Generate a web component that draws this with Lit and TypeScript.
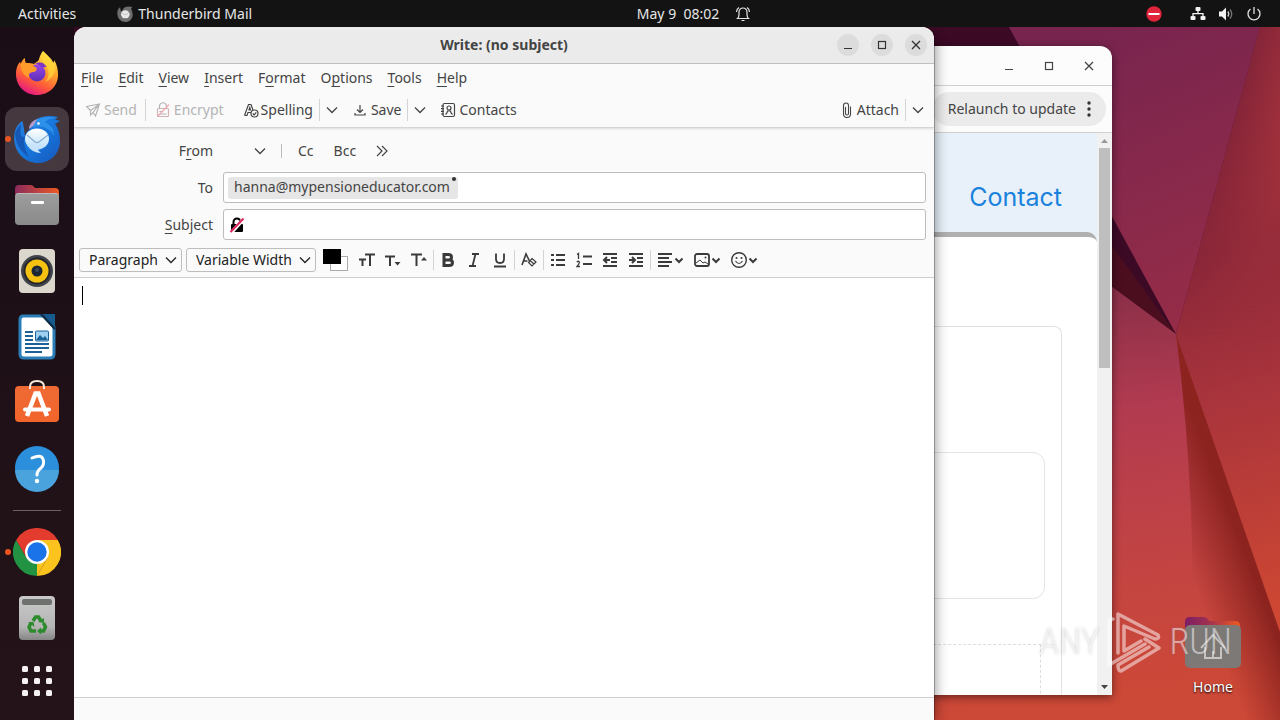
import { LitElement, html, css, svg } from "lit";
import { customElement } from "lit/decorators.js";

const chevron = html`<svg class="chev" width="12" height="12" viewBox="0 0 12 12"><path d="M1 3.500 6 8.500 11 3.500" fill="none" stroke="currentColor" stroke-width="1.300"/></svg>`;
const boldChevron = html`<svg width="10" height="16" viewBox="0 0 10 16"><path d="M1.500 6.500 5 10 8.500 6.500" fill="none" stroke="currentColor" stroke-width="2"/></svg>`;

const icons = {
  firefox: html`<svg width="48" height="48" viewBox="0 0 48 48">
    <defs><linearGradient id="ff1" x1="0.800" y1="0" x2="0.300" y2="1"><stop offset="0" stop-color="#fff44f"/><stop offset="0.400" stop-color="#ffa02a"/><stop offset="0.700" stop-color="#ff5a3a"/><stop offset="1" stop-color="#e31587"/></linearGradient>
    <linearGradient id="ff2" x1="0" y1="0" x2="0" y2="1"><stop offset="0" stop-color="#9a45e8"/><stop offset="1" stop-color="#5b2fb5"/></linearGradient></defs>
    <path d="M30 2c4 4 8 7 10 12 1-1 1-2 1-3 3 4 4 10 4 15 0 11-9 20-21 20S3 37 3 25c0-6 2-10 4-12l1 2c0-2 2-5 4-6 0 2 0 4 1 5 3 0 6 0 8 1 2-2 5-3 5-5 1-3 2-6 4-8z" fill="url(#ff1)"/>
    <circle cx="24" cy="24" r="8.500" fill="url(#ff2)"/>
    <path d="M8 14c5-1 11 0 14 4 3 1 2 4-1 5-4 0-6 2-5 6-5-2-9-8-8-15z" fill="#ff9b2b"/>
    <path d="M22 15c5-3 10-1 12 3-2 0-4 0-5 1-1-2-4-4-7-4z" fill="#7b36c9"/>
    <path d="M30 2c-3 5-1 11 3 15 4 5 3 12-1 16 10-4 12-14 8-20C38 8 33 6 30 2z" fill="#ffd93a" opacity="0.700"/></svg>`,
  thunderbird: html`<svg width="48" height="48" viewBox="0 0 48 48">
    <defs><linearGradient id="tb1" x1="0" y1="0" x2="1" y2="1"><stop offset="0" stop-color="#2a80e4"/><stop offset="0.500" stop-color="#1777dc"/><stop offset="1" stop-color="#1757bd"/></linearGradient>
    <linearGradient id="tb2" x2="0" y2="1"><stop stop-color="#ffffff"/><stop offset="1" stop-color="#b9defa"/></linearGradient></defs>
    <path d="M9.500 6C3 10 0 18 1.500 27 3 39 13 48 25 48c13 0 22-10 22-22 0-7-2-13-5-17l5-3c-2-1-3-1-5-1l3-3C33-1 21 2 17.500 11L17 14q-4 3-5 7-1-8-2.500-15z" fill="url(#tb1)"/>
    <path d="M2 18Q3 34 16 42 9 30 12 21 6 26 8 9 4 13 2 18z" fill="#1658b5"/>
    <path d="M20 8C25 2 36 1 44 3q-8 0-12 4 9 4 9 14-6-12-21-9z" fill="#3aa0f2" opacity="0.600"/>
    <path d="M16 14c0-5 4-9 9-10-3 2-3 5-5 7z" fill="#b59bcb"/>
    <circle cx="25.500" cy="8.500" r="1.300" fill="#fff"/>
    <ellipse cx="24" cy="24" rx="12" ry="10.500" fill="url(#tb2)"/>
    <path d="M14 30q5 8 14 8-3-2-3-4l6-3z" fill="#c6e3fa"/>
    <path d="M14 20l8 7q2 1 4 0l9-7" fill="none" stroke="#86aed0" stroke-width="1.300"/></svg>`,
  files: html`<svg width="48" height="48" viewBox="0 0 48 48">
    <defs><linearGradient id="fl1"><stop offset="0" stop-color="#8a2a5d"/><stop offset="1" stop-color="#ee5a24"/></linearGradient><linearGradient id="fl2" x2="0" y2="1"><stop stop-color="#9d9d9d"/><stop offset="1" stop-color="#8a8a8a"/></linearGradient></defs>
    <path d="M2 8q0-4 4-4h12q2 0 4 3h20q4 0 4 4v12H2z" fill="url(#fl1)"/><rect x="2" y="12" width="44" height="32" rx="4" fill="url(#fl2)"/><path d="M3 13.500q1-1 3-1h36q2 0 3 1" stroke="#bbb" fill="none"/><rect x="18" y="20" width="13" height="3" rx="1" fill="#fff"/></svg>`,
  music: html`<svg width="48" height="48" viewBox="0 0 48 48"><rect x="6" y="2" width="36" height="44" rx="4" fill="#dcd7cd"/><circle cx="24" cy="24" r="16" fill="#40434a"/><circle cx="24" cy="24" r="13.500" fill="#25272c"/><circle cx="24" cy="24" r="11.500" fill="#f5c211"/><circle cx="24" cy="24" r="5.500" fill="#1d2733"/><circle cx="24" cy="23" r="2" fill="#3a4a5c"/></svg>`,
  writer: html`<svg width="48" height="48" viewBox="0 0 48 48"><path d="M10 3h21l10 11v27q0 4-4 4H11q-4 0-4-4V7q0-4 3-4z" fill="#fff" stroke="#2a7fb8" stroke-width="3"/><path d="M29 1h13v13z" fill="#175a8e"/><path d="M28 1l14 15" stroke="#0d2b45" stroke-width="2.500"/>
    <g fill="#1b6299"><rect x="12" y="18" width="8" height="2"/><rect x="12" y="22" width="8" height="2"/><rect x="12" y="26" width="8" height="2"/><rect x="12" y="30" width="24" height="2"/><rect x="12" y="34" width="24" height="2"/><rect x="12" y="38" width="17" height="2"/></g><rect x="22.500" y="18" width="13" height="10" rx="1" fill="#9fd0f0" stroke="#1b6299"/><path d="M23 27l4-5 3 3 2-2 3 4z" fill="#1b6299"/></svg>`,
  software: html`<svg width="48" height="48" viewBox="0 0 48 48"><defs><linearGradient id="sw1" x2="0" y2="1"><stop stop-color="#ee6a35"/><stop offset="1" stop-color="#f2652b"/></linearGradient></defs><rect x="2" y="7" width="44" height="36" rx="4" fill="url(#sw1)"/><path d="M17 10V8q0-6 7-6t7 6v2" fill="none" stroke="#f7e9d8" stroke-width="2"/><path d="M14 37 22.500 14.500h3L34 37" fill="none" stroke="#fff" stroke-width="4.500"/><path d="M12 30.500h24" stroke="#fff" stroke-width="4" stroke-linecap="round"/></svg>`,
  help: html`<svg width="48" height="48" viewBox="0 0 48 48"><circle cx="24" cy="23" r="22" fill="#2b8fdc"/><path d="M2 25h44a22 22 0 0 1-44 0z" fill="#4aa3dd"/><path d="M19 13q9-4 11 1t-2 9q-4 3-4 7" fill="none" stroke="#fff" stroke-width="3" stroke-linecap="round"/><circle cx="24" cy="36" r="2.200" fill="#fff"/></svg>`,
  chrome: html`<svg width="48" height="48" viewBox="0 0 48 48"><path d="M3.200 12 13.600 30 24 36 24 48A24 24 0 0 1 3.200 12z" fill="#229342"/><path d="M44.800 12A24 24 0 0 1 24 48L34.400 30 34 18 24 12z" fill="#fcc31e"/><path d="M3.200 12A24 24 0 0 1 44.800 12H24L16 28 13.600 30z" fill="#e33b2e"/><path d="M24 36 34.400 30 24 48z" fill="#fcc31e"/><circle cx="24" cy="24" r="12" fill="#fff"/><circle cx="24" cy="24" r="9.700" fill="#1a73e8"/></svg>`,
  trash: html`<svg width="48" height="48" viewBox="0 0 48 48"><defs><linearGradient id="tr1" x2="0" y2="1"><stop stop-color="#c9c9c9"/><stop offset="0.700" stop-color="#b5b5b5"/><stop offset="1" stop-color="#858585"/></linearGradient></defs><rect x="6" y="2" width="36" height="44" rx="4" fill="url(#tr1)"/><rect x="9" y="5" width="30" height="6" rx="2" fill="#6f716f"/>
    <g fill="none" stroke="#2c8b2c" stroke-width="3.500"><path d="M20 27l2.500-4h3l2.500 4M30.500 29l2 4-2 4H27M23 37h-5l-2-4 2-4"/></g><path d="M25 28l6 1v-5zM28 33.500v7l-4-3.500zM15 28l5.500 0 1 5z" fill="#2c8b2c"/></svg>`,
  grid: html`<svg width="48" height="48" viewBox="0 0 48 48"><g fill="#f6f2f4">${[9, 21, 33].map((y) => [9, 21, 33].map((x) => svg`<rect x=${x} y=${y} width="6" height="6" rx="1.500"/>`))}</g></svg>`,
};

const s16 = (body: unknown) => html`<svg width="16" height="16" viewBox="0 0 16 16" fill="none" stroke="currentColor" stroke-width="1.200">${body}</svg>`;
const f16 = (body: unknown) => html`<svg width="16" height="16" viewBox="0 0 16 16" fill="none" stroke="currentColor" stroke-width="2">${body}</svg>`;

const tool = {
  send: s16(svg`<path d="M1.500 4.500 14.500 2 10.500 14 8 10.500 5.500 13V8.500zM5.500 8.500 14 2.500 8 10.500"/>`),
  encrypt: s16(svg`<rect x="2.500" y="6.500" width="11" height="8" rx="1" stroke="#d3b3b3"/><path d="M4.500 6.500V4.500a3.500 3.500 0 0 1 7-.5v2.500M4.500 9.500h3M4.500 12h7"/><path d="M2.500 14.500 14 2.500" stroke="#efa9b2"/>`),
  spelling: s16(svg`<path d="M1.500 13.500 5.500 2.500H8L10 8M1.500 13.500H4L5 10.500H8M6 8l.8-2.500L7.500 8z"/><circle cx="11.500" cy="11.500" r="3.500"/><path d="M9.800 11.500l1.300 1.300 2.200-2.400"/>`),
  save: s16(svg`<path d="M8 3v7M5 7.500 8 10.500l3-3M3 11v2h10v-2"/>`),
  contacts: s16(svg`<rect x="3" y="1.500" width="11.500" height="13" rx="1.500"/><path d="M1 4h3M1 6.700h3M1 9.300h3M1 12h3"/><circle cx="9" cy="6" r="2"/><path d="M5.500 12.500c1-1 2-1.500 2-3.500h3c0 2 1 2.500 2 3.500"/>`),
  attach: s16(svg`<path d="M6.500 5v6.500a1.500 1.500 0 0 0 3 0V3.500a2 2 0 0 0-5 0v8.500a3.500 3.500 0 0 0 7 0V4.500" stroke-width="1.100"/>`),
};

const formatIcons = {
  size: f16(svg`<path d="M6 2.500h10M11 2.500V14M0 7.500h7M3.500 7.500V14"/>`),
  smaller: f16(svg`<path d="M0 4.500h10M5 4.500V14"/><path d="M9.500 10h6L12.500 13.500z" fill="currentColor" stroke="none"/>`),
  larger: f16(svg`<path d="M0 2.500h11M5.500 2.500V14"/><path d="M10 8.500h6L13 5z" fill="currentColor" stroke="none"/>`),
  bold: f16(svg`<path d="M4 2.500h4.500q3 0 3 2.700T8.500 8H4zM4 8h5q3.500 0 3.500 2.700T9 13.500H4z" stroke-width="3"/>`),
  italic: f16(svg`<path d="M6 2h7M3 14h7M9.500 2 6.500 14" stroke-width="1.800"/>`),
  underline: f16(svg`<path d="M4 1.500V7q0 4 4 4t4-4V1.500M2 14.500h12" stroke-width="1.800"/>`),
  clear: f16(svg`<path d="M1 13 5 2l3.500 7M2.500 9h4" stroke-width="1.600"/><path d="M11 6.500l4 3.500-4 4-3.500-3.500zM9 8.500l4 3.500" stroke-width="1.200"/>`),
  bullets: f16(svg`<path d="M6 3h9M6 8h9M6 13h9M1 3h3M1 8h3M1 13h3"/>`),
  numbers: f16(svg`<path d="M7 4.500h9M7 12h9"/><path d="M1 2.500 2.500 1.500V7M.7 10q2-1.500 2.500 0T1 14.500h3" stroke-width="1.300"/>`),
  outdent: f16(svg`<path d="M1 2h14M9 6h6M9 10h6M1 14h14M2.500 8H8M5 5 2 8l3 3"/>`),
  indent: f16(svg`<path d="M1 2h14M9 6h6M9 10h6M1 14h14M1 8h5.500M4 5l3 3-3 3"/>`),
  align: f16(svg`<path d="M1 2h14M1 6h11M1 10h14M1 14h11"/>`),
  image: f16(svg`<rect x="1" y="2" width="14" height="12" rx="2" stroke-width="1.800"/><path d="M2 11l4-3 3 3 2-1 3 2" stroke-width="1"/><circle cx="11.500" cy="5.500" r="1" fill="currentColor" stroke="none"/>`),
  smiley: f16(svg`<circle cx="8" cy="8" r="7.300" stroke-width="1.400"/><path d="M4.500 9q3.500 5 7 0" stroke-width="1.200"/><circle cx="5.500" cy="6" r="1" fill="currentColor" stroke="none"/><circle cx="10.500" cy="6" r="1" fill="currentColor" stroke="none"/>`),
};

const minimizeGlyph = html`<svg width="10" height="10" viewBox="0 0 10 10"><path d="M1 8.500h8" stroke="currentColor" stroke-width="1.200"/></svg>`;
const maximizeGlyph = html`<svg width="10" height="10" viewBox="0 0 10 10"><rect x="1.500" y="1.500" width="7" height="7" fill="none" stroke="currentColor" stroke-width="1.200"/></svg>`;
const closeGlyph = html`<svg width="10" height="10" viewBox="0 0 10 10"><path d="M1 1l8 8M9 1 1 9" stroke="currentColor" stroke-width="1.300"/></svg>`;

const base = css`
  * { box-sizing: border-box; }
  button, input, select, textarea { font: inherit; color: inherit; margin: 0; padding: 0; border: 0; background: none; outline: 0; }
  button { display: flex; align-items: center; justify-content: center; white-space: nowrap; }
  svg { display: block; flex: none; }
`;

@customElement("top-bar")
class TopBar extends LitElement {
  static styles = [base, css`
    :host { display: grid; grid-template-columns: 1fr auto 1fr; align-items: center; height: 27px; background: #131313; color: #e6e6e6; padding: 0 18px; }
    .left, .clock, .right { display: flex; align-items: center; }
    .left { gap: 41px; }
    .app { gap: 5px; }
    .clock { gap: 16px; padding-left: 108px; white-space: pre; }
    .right { justify-content: flex-end; gap: 12px; }
    .rec { margin-right: 16px; }
  `];
  render() {
    return html`
      <div class="left"><button>Activities</button>
        <button class="app"><svg width="16" height="16" viewBox="0 0 48 48"><path d="M9 4C1 10 0 18 1.500 27 3 39 13 48 25 48c13 0 22-10 22-22 0-7-2-13-5-17l4-6C33-1 21 2 17.500 11L12 17z" fill="#6e6e6e"/><ellipse cx="25" cy="25" rx="13" ry="12" fill="#e8e8e8"/><path d="M14 19q11 14 22 0" fill="none" stroke="#aaa" stroke-width="2"/></svg>Thunderbird Mail</button></div>
      <button class="clock">May 9  08:02<svg width="16" height="16" viewBox="0 0 16 16" fill="none" stroke="currentColor" stroke-width="1.200"><path d="M2.500 12.500h11q-1.500-1.500-1.500-4V6a4 4 0 0 0-8 0v2.500q0 2.500-1.500 4zM6.500 14.500h3M1.500 6q0-3 2.500-4.500M14.500 6q0-3-2.500-4.500"/></svg></button>
      <div class="right">
        <svg class="rec" width="16" height="16" viewBox="0 0 16 16"><circle cx="8" cy="8" r="7.700" fill="#e0243b"/><rect x="2.500" y="7" width="11" height="2" fill="#fff"/></svg>
        <svg width="16" height="16" viewBox="0 0 16 16" fill="#f2f2f2"><rect x="5.500" y="1" width="5" height="4" rx="1"/><rect x="0.500" y="10" width="5" height="4" rx="1"/><rect x="10.500" y="10" width="5" height="4" rx="1"/><path d="M8 5v3M3 10.500V7.700h10v2.800" fill="none" stroke="#f2f2f2" stroke-width="1.300"/></svg>
        <svg width="16" height="16" viewBox="0 0 16 16"><path d="M1 5.500h3L8 1.500v13L4 10.500H1z" fill="#f2f2f2"/><path d="M9.800 5.500q2 2.500 0 5" fill="none" stroke="#ccc" stroke-width="1.300"/><path d="M12 3.500q3.500 4.500 0 9" fill="none" stroke="#777" stroke-width="1.300"/></svg>
        <svg width="16" height="16" viewBox="0 0 16 16" fill="none" stroke="#e0e0e0" stroke-width="1.300"><path d="M8 1v7M4.500 3a6 6 0 1 0 7 0"/></svg>
      </div>`;
  }
}

@customElement("app-dock")
class AppDock extends LitElement {
  static styles = [base, css`
    :host { display: flex; flex-direction: column; align-items: center; gap: 2px; width: 74px; padding: 14px 0 10px; background: linear-gradient(#1a0d16, #241419); }
    button { width: 64px; height: 64px; border-radius: 12px; position: relative; flex: none; }
    .active { background: #45383f; }
    .running::before { content: ""; position: absolute; left: 0; width: 6px; height: 6px; border-radius: 3px; background: #e95420; }
    hr { width: 48px; height: 1px; margin: 7px 0; border: 0; background: #6b6065; flex: none; }
    .grid { margin-top: auto; height: 58px; }
  `];
  render() {
    return html`
      <button aria-label="Firefox">${icons.firefox}</button>
      <button class="active running" aria-label="Thunderbird">${icons.thunderbird}</button>
      <button aria-label="Files">${icons.files}</button>
      <button aria-label="Rhythmbox">${icons.music}</button>
      <button aria-label="LibreOffice Writer">${icons.writer}</button>
      <button aria-label="Ubuntu Software">${icons.software}</button>
      <button aria-label="Help">${icons.help}</button>
      <hr />
      <button class="running" aria-label="Chrome">${icons.chrome}</button>
      <button aria-label="Trash">${icons.trash}</button>
      <button class="grid" aria-label="Show applications">${icons.grid}</button>`;
  }
}

@customElement("browser-window")
class BrowserWindow extends LitElement {
  static styles = [base, css`
    :host { display: flex; flex-direction: column; background: #fcfcfc; border-radius: 12px 12px 0 0; overflow: hidden; color: #444; box-shadow: 0 2px 8px rgba(0,0,0,.5); }
    .title { display: flex; justify-content: flex-end; align-items: center; gap: 18px; height: 40px; padding-right: 12px; border-bottom: 1px solid #d0d0d0; }
    .title button { width: 22px; height: 22px; }
    .bar { display: flex; justify-content: flex-end; align-items: center; height: 47px; padding-right: 6px; border-bottom: 1px solid #cfcfcf; }
    .relaunch { height: 34px; padding: 0 12px 0 16px; border-radius: 17px; background: #ebebeb; gap: 8px; }
    .view { display: flex; flex: 1; min-height: 0; }
    .page { flex: 1; display: flex; flex-direction: column; background: #e8f1f9; overflow: hidden; }
    nav { flex: none; height: 99px; padding: 46px 35px 0; text-align: right; font: 25px/36px Inter, sans-serif; }
    nav a { color: #1a82dc; text-decoration: none; }
    .sheet { flex: 1; min-height: 0; display: flex; background: #fff; border-top: 5px solid #b0b0b0; border-radius: 0 10px 0 0; padding: 89px 35px 0 0; }
    .card { flex: 1; border: 1px solid #e2e2e2; border-bottom: 0; border-radius: 0 8px 0 0; padding-top: 125px; }
    .inner { height: 147px; margin-right: 16px; border: 1px solid #e4e4e4; border-radius: 12px; }
    .dashed { height: 60px; margin: 45px 20px 0 0; border: 1px dashed #ddd; }
    .scroll { width: 15px; display: flex; flex-direction: column; align-items: center; background: #f1f1f1; }
    .scroll svg { width: 15px; height: 15px; }
    .thumb { width: 11px; height: 220px; background: #bfbfbf; margin-bottom: auto; }
  `];
  render() {
    return html`
      <div class="title"><button aria-label="Minimize">${minimizeGlyph}</button><button aria-label="Maximize">${maximizeGlyph}</button><button aria-label="Close">${closeGlyph}</button></div>
      <div class="bar"><button class="relaunch">Relaunch to update<svg width="10" height="18" viewBox="0 0 10 18" fill="#333"><circle cx="5" cy="3" r="1.700"/><circle cx="5" cy="9" r="1.700"/><circle cx="5" cy="15" r="1.700"/></svg></button></div>
      <div class="view">
        <div class="page"><nav><a href="#contact">Contact</a></nav><div class="sheet"><div class="card"><div class="inner"></div><div class="dashed"></div></div></div></div>
        <div class="scroll"><svg viewBox="0 0 15 15"><path d="M4 10h7L7.500 6z" fill="#999"/></svg><div class="thumb"></div><svg viewBox="0 0 15 15"><path d="M4 5h7L7.500 9z" fill="#444"/></svg></div>
      </div>`;
  }
}

@customElement("compose-window")
class ComposeWindow extends LitElement {
  static styles = [base, css`
    :host { display: flex; flex-direction: column; background: #fafafa; color: #444; border-radius: 12px 12px 0 0; overflow: hidden; box-shadow: 0 0 0 1px rgba(0,0,0,.25), 0 2px 14px rgba(0,0,0,.5); }
    .title { display: grid; grid-template-columns: 1fr auto 1fr; align-items: center; height: 37px; padding: 0 7px; background: #ebebeb; border-bottom: 1px solid #bfbfbf; }
    h1 { grid-column: 2; margin: 0; font-size: 14px; font-weight: 700; }
    .controls { display: flex; justify-content: flex-end; gap: 12px; color: #333; }
    .controls button { width: 22px; height: 22px; border-radius: 11px; background: #dcdcdc; }
    .menu { display: flex; gap: 1px; height: 28px; }
    .menu button { padding: 0 7px; }
    u { text-underline-offset: 3px; text-decoration-thickness: 1px; }
    .tools { display: flex; align-items: center; height: 36px; padding: 0 10px 0 11px; border-bottom: 1px solid #d5d5d5; box-shadow: 0 1px 2px rgba(0,0,0,.12); }
    .tools button { gap: 2px; height: 28px; }
    .tools .save { gap: 3px; }
    .tools .off { color: #b4b4b4; gap: 3px; padding-right: 2px; }
    .line { width: 1px; height: 22px; background: #d4d4d4; }
    .tools .line { margin: 0 6px; }
    .tools .gap { margin-left: 14px; }
    .tools .wide-gap { margin-left: 17px; }
    .tools .near { margin-left: 3px; }
    .spring { flex: 1; }
    .address { display: grid; grid-template-columns: 139px 1fr; column-gap: 10px; row-gap: 6px; padding: 7px 8px 3px 0; align-items: center; }
    .address label { text-align: right; }
    .from { display: flex; align-items: center; height: 31px; }
    .from select { appearance: none; width: 31px; height: 24px; }
    .from .line { height: 14px; margin: 0 16px 0 15px; background: #bbb; }
    .from button { margin-right: 20px; }
    .box { display: flex; align-items: center; height: 31px; border: 1px solid #bdbdbd; border-radius: 3px; background: #fff; padding: 0 4px; }
    .box input { flex: 1; height: 26px; }
    .pill { display: flex; height: 22px; line-height: 20px; padding: 0 2px 0 6px; background: #e6e6e6; border-radius: 3px; }
    .dot { width: 4px; height: 4px; border-radius: 2px; background: #333; margin: 0 0 0 2px; }
    .format { display: flex; align-items: center; height: 35px; padding: 0 5px; gap: 4px; border-bottom: 1px solid #cfcfcf; color: #3a3a3a; }
    .pick { display: grid; align-items: center; justify-items: end; height: 24px; border: 1px solid #bdbdbd; border-radius: 3px; color: #222; }
    .pick select { grid-area: 1/1; appearance: none; width: 100%; height: 22px; padding-left: 9px; }
    .pick svg { grid-area: 1/1; margin-right: 4px; pointer-events: none; }
    .para { width: 103px; }
    .font { width: 130px; }
    .colors { margin: 0 1px 0 3px; }
    .icons { display: flex; align-items: center; }
    .icons button { width: 26px; height: 24px; }
    .icons .wide { width: 37px; gap: 1px; }
    .icons .line { height: 20px; margin: 0 1px; }
    .editor { flex: 1; display: flex; background: #fff; padding: 8px; }
    .caret { width: 1px; height: 19px; background: #000; }
    textarea { flex: 1; resize: none; height: 100%; }
    footer { height: 23px; border-top: 1px solid #cfcfcf; background: #fafafa; }
  `];
  render() {
    const f = formatIcons;
    const line = html`<span class="line"></span>`;
    return html`
      <div class="title"><h1>Write: (no subject)</h1><div class="controls"><button aria-label="Minimize">${minimizeGlyph}</button><button aria-label="Maximize">${maximizeGlyph}</button><button aria-label="Close">${closeGlyph}</button></div></div>
      <div class="menu"><button><span><u>F</u>ile</span></button><button><span><u>E</u>dit</span></button><button><span><u>V</u>iew</span></button><button><span><u>I</u>nsert</span></button><button><span>F<u>o</u>rmat</span></button><button><span>O<u>p</u>tions</span></button><button><span><u>T</u>ools</span></button><button><span><u>H</u>elp</span></button></div>
      <div class="tools">
        <button class="off">${tool.send}Send</button>${line}
        <button class="off near">${tool.encrypt}Encrypt</button>
        <button class="wide-gap">${tool.spelling}Spelling</button>${line}<button aria-label="Spelling options">${chevron}</button>
        <button class="gap save">${tool.save}Save</button>${line}<button aria-label="Save options">${chevron}</button>
        <button class="gap save">${tool.contacts}Contacts</button>
        <span class="spring"></span>
        <button>${tool.attach}Attach</button>${line}<button aria-label="Attach options">${chevron}</button>
      </div>
      <div class="address">
        <label for="from">F<u>r</u>om</label>
        <div class="from"><select id="from"><option></option></select>${chevron}${line}<button>Cc</button><button>Bcc</button><button aria-label="More recipients"><svg width="12" height="12" viewBox="0 0 12 12"><path d="M1 1l5 5-5 5M6 1l5 5-5 5" fill="none" stroke="currentColor" stroke-width="1.200"/></svg></button></div>
        <label for="to">To</label>
        <div class="box"><span class="pill">hanna@mypensioneducator.com<span class="dot"></span></span><input id="to" type="text" /></div>
        <label for="subject"><u>S</u>ubject</label>
        <div class="box"><svg width="18" height="18" viewBox="0 0 18 18"><rect x="3" y="8" width="12" height="8" rx="1" fill="#000"/><path d="M5.500 8V6a3.500 3.500 0 0 1 7 0v2" fill="none" stroke="#000" stroke-width="2"/><path d="M3.500 16.500 16 2.500" stroke="#fff" stroke-width="3.500"/><path d="M2.500 16 15.500 2.500" stroke="#e0225a" stroke-width="2"/></svg><input id="subject" type="text" /></div>
      </div>
      <div class="format">
        <div class="pick para"><select aria-label="Paragraph format"><option>Paragraph</option></select>${chevron}</div>
        <div class="pick font"><select aria-label="Font"><option>Variable Width</option></select>${chevron}</div>
        <button class="colors" aria-label="Text colour"><svg width="26" height="24" viewBox="0 0 26 24"><rect x="7.500" y="8.500" width="17" height="14" fill="#fff" stroke="#aaa"/><rect width="18" height="15" y="1" fill="#000"/></svg></button>
        <div class="icons">
          <button aria-label="Font size">${f.size}</button><button aria-label="Smaller">${f.smaller}</button><button aria-label="Larger">${f.larger}</button>${line}
          <button aria-label="Bold">${f.bold}</button><button aria-label="Italic">${f.italic}</button><button aria-label="Underline">${f.underline}</button>${line}
          <button aria-label="Clear formatting">${f.clear}</button>${line}
          <button aria-label="Bullets">${f.bullets}</button><button aria-label="Numbers">${f.numbers}</button><button aria-label="Outdent">${f.outdent}</button><button aria-label="Indent">${f.indent}</button>${line}
          <button class="wide" aria-label="Align">${f.align}${boldChevron}</button><button class="wide" aria-label="Insert image">${f.image}${boldChevron}</button><button class="wide" aria-label="Smiley">${f.smiley}${boldChevron}</button>
        </div>
      </div>
      <div class="editor"><span class="caret"></span><textarea aria-label="Message body"></textarea></div>
      <footer></footer>`;
  }
}

@customElement("app-root")
class AppRoot extends LitElement {
  static styles = [base, css`
    :host { display: flex; flex-direction: column; height: 100vh; overflow: hidden; font: 14px/20px "Noto Sans", "Open Sans", sans-serif; }
    .body { flex: 1; display: flex; min-height: 0; }
    .desk { flex: 1; position: relative; overflow: hidden; background: #3d0a26; }
    .wall { position: absolute; top: 0; right: 0; height: 100%; }
    browser-window { position: absolute; left: 120px; right: 168px; top: 19px; bottom: 25px; }
    compose-window { position: absolute; left: 0; right: 346px; top: 0; bottom: 0; }
    .home { position: absolute; right: 27px; bottom: 23px; width: 80px; flex-direction: column; gap: 8px; color: #fff; text-shadow: 0 1px 2px #000; }
    .mark { position: absolute; right: 48px; bottom: 46px; display: flex; align-items: center; gap: 8px; font: 300 36px/64px "Liberation Sans Narrow", "Roboto Condensed", sans-serif; color: rgba(255,255,255,.5); text-shadow: 0 0 3px rgba(120,120,120,.35); pointer-events: none; }
  `];
  render() {
    return html`
      <top-bar></top-bar>
      <div class="body">
        <app-dock></app-dock>
        <main class="desk">
          <svg class="wall" viewBox="900 27 380 693" preserveAspectRatio="xMaxYMin slice">
            <defs>
              <linearGradient id="a" gradientUnits="userSpaceOnUse" x1="1080" y1="27" x2="1200" y2="300"><stop stop-color="#77244f"/><stop offset="1" stop-color="#942c48"/></linearGradient>
              <linearGradient id="b" gradientUnits="userSpaceOnUse" x1="1190" y1="260" x2="1290" y2="600"><stop stop-color="#8b2739"/><stop offset="0.400" stop-color="#a9343c"/><stop offset="1" stop-color="#cd4733"/></linearGradient>
              <linearGradient id="c" gradientUnits="userSpaceOnUse" x1="1110" y1="290" x2="1150" y2="690"><stop stop-color="#8a2f48"/><stop offset="0.300" stop-color="#b23b50"/><stop offset="0.700" stop-color="#c34442"/><stop offset="1" stop-color="#cc4837"/></linearGradient>
              <linearGradient id="d" gradientUnits="userSpaceOnUse" x1="1185" y1="560" x2="1264" y2="530"><stop stop-color="#92261f" stop-opacity="0"/><stop offset="0.700" stop-color="#8c231f"/><stop offset="1" stop-color="#8f241e"/></linearGradient>
              <linearGradient id="e" gradientUnits="userSpaceOnUse" x1="1218" y1="120" x2="1290" y2="140"><stop stop-color="#7c2138"/><stop offset="1" stop-color="#a8343c"/></linearGradient>
              <linearGradient id="g" gradientUnits="userSpaceOnUse" x1="0" y1="100" x2="0" y2="340"><stop stop-color="#fff"/><stop offset="1" stop-color="#000"/></linearGradient>
              <mask id="m"><rect x="900" y="27" width="380" height="693" fill="url(#g)"/></mask>
            </defs>
            <rect x="900" y="27" width="380" height="693" fill="#3d0a26"/>
            <path d="M1009 27H1260L1176 334z" fill="url(#a)"/>
            <path d="M1260 27H1280V720L1176 334z" fill="url(#b)"/>
            <path d="M1260 27H1280V340H1176z" fill="url(#e)" mask="url(#m)"/>
            <path d="M1050 160 1176 334 1050 240z" fill="#4a0e1f"/>
            <path d="M900 130 1176 334 1280 640V720H900z" fill="url(#c)"/>
            <path d="M1176 334 1280 632V720H1190Q1200 520 1176 334z" fill="url(#d)"/>
          </svg>
          <browser-window></browser-window>
          <button class="home"><svg width="56" height="52" viewBox="0 0 56 52"><defs><linearGradient id="h"><stop stop-color="#7d1d66"/><stop offset="0.400" stop-color="#9c2f52"/><stop offset="1" stop-color="#ef5a22"/></linearGradient></defs><path d="M0 5q0-5 5-5h14q3 0 5 4h26q5 0 5 5v12H0z" fill="url(#h)"/><rect y="8" width="56" height="43" rx="5" fill="#7d7977"/><path d="M16 31 28 18 40 31M20 30V41H36V30M28 34v7" fill="none" stroke="#c9c4c2" stroke-width="2"/></svg>Home</button>
          <div class="mark"><span>ANY</span><svg width="54" height="62" viewBox="0 0 54 62" fill="none" stroke="currentColor" stroke-width="3.500" stroke-linejoin="round" stroke-linecap="round"><path d="M6 8Q2 8 2 12V54L38 33M11 42V3L51 24Q53 28 48 28L17 15V40L34 30M38 28 52 37 14 60Q11 60 11 54L42 36"/></svg><span>RUN</span></div>
          <compose-window></compose-window>
        </main>
      </div>`;
  }
}
